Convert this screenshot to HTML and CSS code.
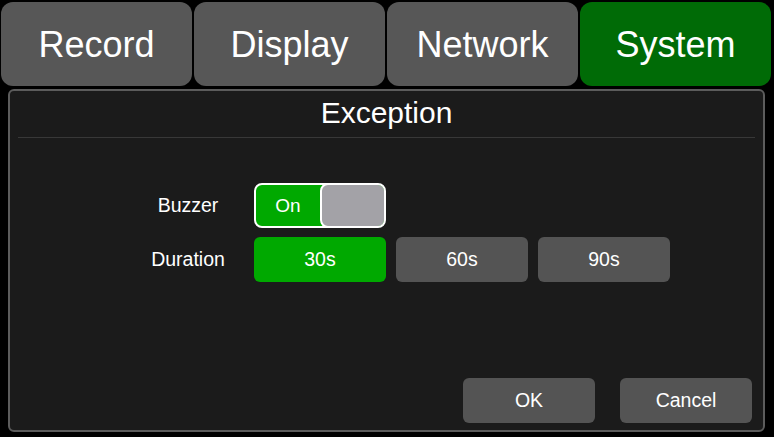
FILE: index.html
```html
<!DOCTYPE html>
<html lang="en">

<head>
    <meta charset="UTF-8">
    <title>System - Exception</title>
    <link rel="stylesheet" href="styles.css">
</head>

<body>
    <div class="tabs">
        <div class="tab">Record</div>
        <div class="tab">Display</div>
        <div class="tab">Network</div>
        <div class="tab current">System</div>
    </div>
    <div class="panel">
        <div class="title">Exception</div>
        <div class="form">
            <div class="row">
                <div class="label">Buzzer</div>
                <div class="switch">
                    <span class="on">On</span>
                    <span class="knob"></span>
                </div>
            </div>
            <div class="row">
                <div class="label">Duration</div>
                <div class="btn active">30s</div>
                <div class="btn">60s</div>
                <div class="btn">90s</div>
            </div>
        </div>
        <div class="actions">
            <div class="btn">OK</div>
            <div class="btn">Cancel</div>
        </div>
    </div>
</body>

</html>
```

FILE: styles.css
```css
body,
div {
    margin: 0;
    padding: 0;
}

body {
    background: #000;
    color: #fff;
    font-family: "Liberation Sans", Arial, sans-serif;
}

.tabs {
    display: grid;
    grid-template-columns: repeat(4, 1fr);
    column-gap: 2px;
    width: 770px;
    padding: 2px 0 0 1px;
}

.tab {
    height: 84px;
    line-height: 86px;
    text-align: center;
    font-size: 36px;
    background: #575757;
    border-radius: 12px;
}

.tab.current {
    background: #006b06;
}

.panel {
    display: flex;
    flex-direction: column;
    box-sizing: border-box;
    width: 757px;
    height: 343px;
    margin: 3px 0 0 8px;
    background: #1b1b1b;
    border: 2px solid #5c5c5c;
    border-radius: 6px;
}

.title {
    height: 46px;
    line-height: 44px;
    text-align: center;
    font-size: 30px;
    margin: 0 8px;
    border-bottom: 1px solid #383838;
}

.form {
    display: flex;
    flex-direction: column;
    row-gap: 9px;
    padding-top: 45px;
}

.row {
    display: flex;
    align-items: center;
    column-gap: 10px;
}

.label {
    width: 100px;
    margin: 0 6px 0 128px;
    text-align: center;
    font-size: 19.5px;
}

.switch {
    display: flex;
    box-sizing: border-box;
    width: 132px;
    height: 45px;
    background: #00a900;
    border: 2px solid #fff;
    border-radius: 8px;
    overflow: hidden;
}

.switch .on {
    width: 64px;
    line-height: 41px;
    text-align: center;
    font-size: 19px;
}

.switch .knob {
    flex: 1;
    margin: -2px -2px -2px 0;
    background: #a3a2a7;
    border: 2px solid #fff;
    border-radius: 8px;
}

.btn {
    width: 132px;
    height: 45px;
    line-height: 45px;
    text-align: center;
    font-size: 19.5px;
    background: #545454;
    border-radius: 6px;
}

.btn.active {
    background: #00a900;
}

.actions {
    display: flex;
    justify-content: flex-end;
    column-gap: 25px;
    margin-top: auto;
    padding: 0 11px 7px 0;
}
```
